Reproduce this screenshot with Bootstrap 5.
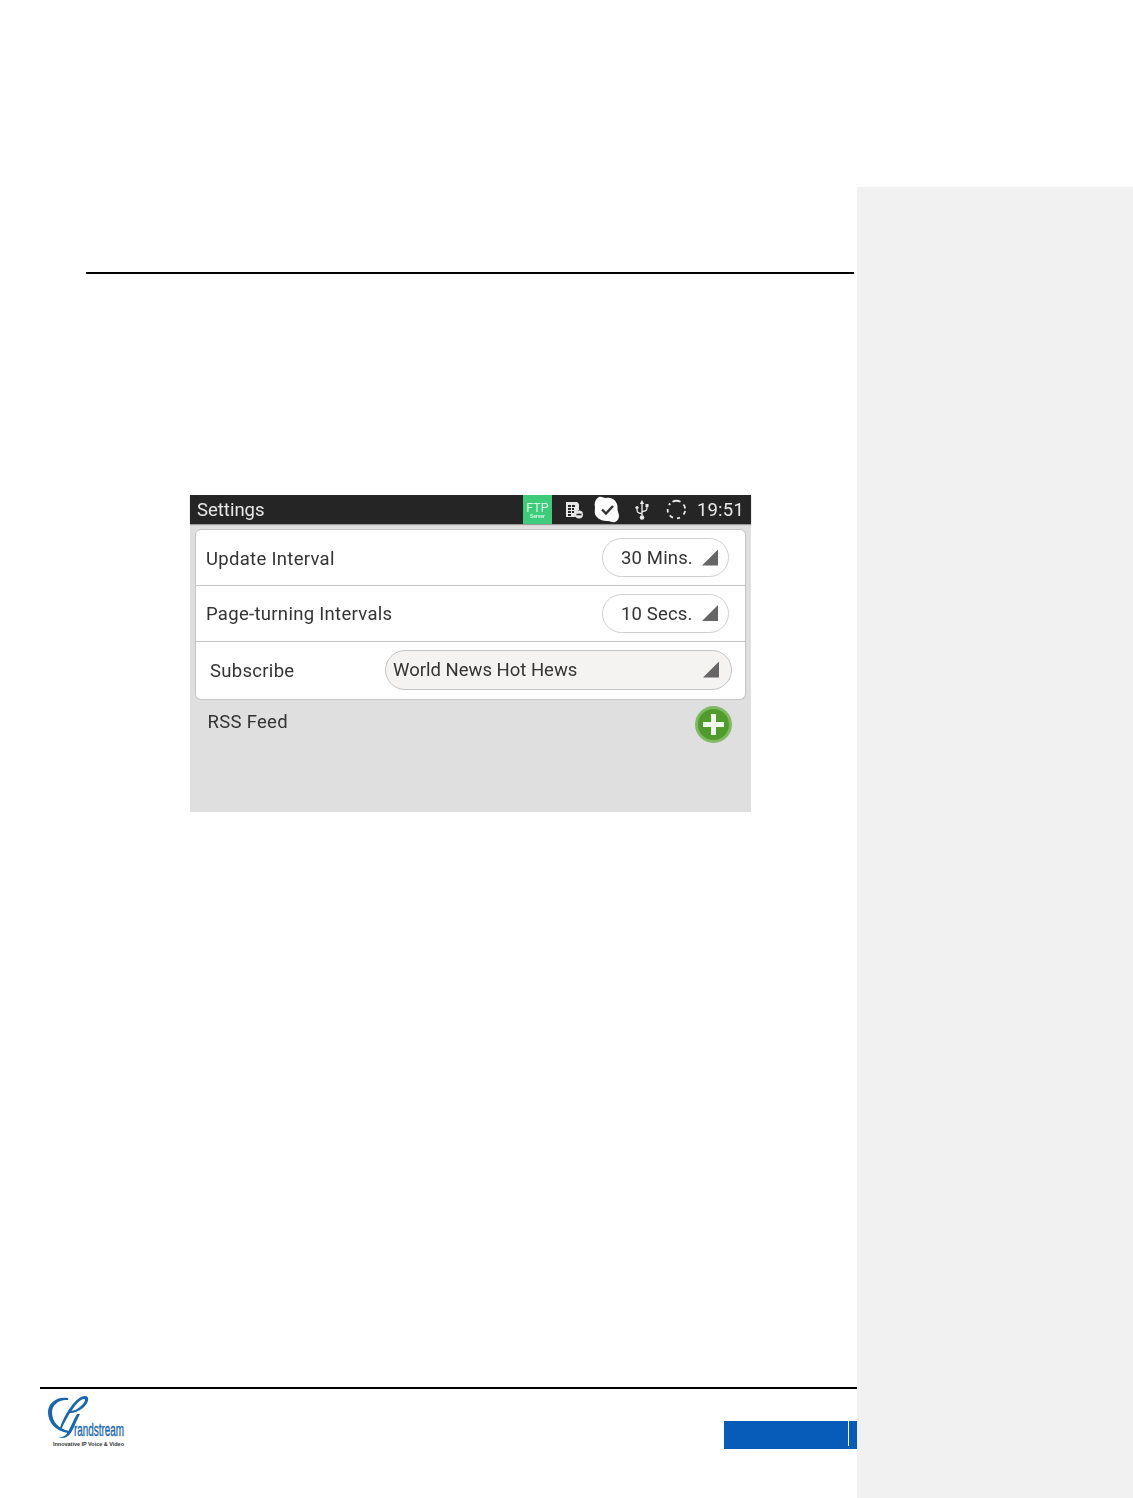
<!DOCTYPE html>
<html lang="en">
<head>
<meta charset="utf-8">
<title>Settings</title>
<link href="https://cdn.jsdelivr.net/npm/bootstrap@5.3.0/dist/css/bootstrap.min.css" rel="stylesheet">
<style>
html,body{height:1498px;overflow:hidden;background:#fff}
.page-wrap{height:1498px}
.doc-col{width:857px;flex:none}
.side-col{width:276px;flex:none;margin-top:187px;background:#f1f1f1}
.top-rule{height:2px;background:#000;margin:272px 3px 0 86px}
.shot{width:561px;height:317px;margin:221px 0 0 190px;background:#dfdfdf;font-family:Roboto,"Liberation Sans",sans-serif;color:#333;font-size:18.5px;line-height:1;filter:blur(.35px)}
.shot-bar{height:29px;background:#252525;color:#e8e8e8;padding-left:7px;box-shadow:0 1px 1px #9a9a9a}
.bar-title{font-size:18.5px;padding-top:2px}
.ftp-tile{width:29px;height:29px;background:#3ecb7a;color:#d8f5e4;margin-left:auto;line-height:1;padding-top:8px}
.ftp-main{font-size:12.5px;line-height:10px}
.ftp-sub{font-size:5px;line-height:6px;font-weight:700}
.bar-time{font-size:18.5px;margin:0 7px 0 10px;letter-spacing:.2px;padding-top:2px}
.ico-doc{margin-left:13px}.ico-ok{margin-left:11px}.ico-usb{margin-left:14px}.ico-ring{margin-left:17px}
.set-panel{margin:5px 5px 0 5px;--bs-list-group-border-color:#c4c4c4;--bs-list-group-border-radius:6px;--bs-list-group-color:#333;--bs-list-group-item-padding-x:0;--bs-list-group-item-padding-y:0}
.set-row{display:flex;align-items:center;height:56px;padding-left:10px!important}
.set-row.first-row{height:57px}
.set-row.last-row{height:58px;padding-left:14px!important}
.row-label{letter-spacing:.3px;padding-top:1px}
.first-row .row-label{padding-top:3px}
.pill-pick{width:127px;height:39px;margin-left:auto;margin-right:16px;border:1px solid #cfcfcf;border-radius:20px;background:#fff;padding:1px 10px 0 18px;letter-spacing:.15px}
.first-row .pill-pick{padding-top:2px}
.pill-wide{width:347px;height:40px;margin-right:13px;margin-bottom:2px;background:#f4f3f2;border-color:#c4c4c4;padding:2px 12px 0 7px;margin-left:auto;letter-spacing:0}
.pick-tri{width:16px;height:16px;background:#666;clip-path:polygon(100% 0,100% 100%,0 100%);margin-left:auto;flex:none;margin-top:-2px}
.rss-row{padding:6px 19px 0 17.5px}
.rss-label{letter-spacing:.3px;padding-top:7px}
.foot-rule{height:2px;background:#000;margin:575px 0 0 40px}
.foot-row{height:109px;position:relative}
.logo-svg{display:block;margin:6px 0 0 48px}
.blue-tab{position:absolute;left:724px;top:32px;width:133px;height:28px;background:#075cb9}
.blue-tab::after{content:"";position:absolute;left:124px;top:0;width:1px;height:25px;background:#fff}
</style>
</head>
<body>
<div class="page-wrap d-flex">
  <div class="doc-col d-flex flex-column">
    <div class="top-rule"></div>
    <div class="shot">
      <div class="shot-bar d-flex align-items-center">
        <span class="bar-title">Settings</span>
        <div class="ftp-tile text-center">
          <div class="ftp-main">FTP</div>
          <div class="ftp-sub">Server</div>
        </div>
        <svg class="ico-doc" width="18" height="18" viewBox="0 0 18 18"><path d="M1 1h11l2 2v6a5 5 0 0 0-3 7H1z" fill="#e8e8e8"/><path d="M3 4h3v2H3zM7 4h3v2H7zM3 7h3v2H3zM7 7h2v2H7zM3 10h3v2H3zM7 10h2v2H7zM3 13h3v2H3z" fill="#252525"/><circle cx="14" cy="13.5" r="4" fill="#e8e8e8"/><rect x="11.5" y="12.7" width="5" height="1.6" fill="#252525"/></svg>
        <svg class="ico-ok" width="27" height="27" viewBox="0 0 27 27"><path d="M5 1c3-1 4 1 7 1 5-1 9 1 11 6 1 3 0 5 1 8 2 4 1 8-3 10-3 1-4-1-7-1-5 0-9-1-12-5-2-3-1-6-1-9C0 8 1 3 5 1z" fill="#fff"/><path d="M8 13.500l4 4 7-7.500" fill="none" stroke="#333" stroke-width="2.400"/></svg>
        <svg class="ico-usb" width="14" height="22" viewBox="0 0 14 22"><path d="M7 1 4.800 5h1.500v11.500h1.400V5h1.500z" fill="#e8e8e8"/><path d="M7 14.500c-5 0-5-2-5-5M7 12.500c5 0 5-2 5-5" fill="none" stroke="#e8e8e8" stroke-width="1.300"/><circle cx="2" cy="8.500" r="1.600" fill="#e8e8e8"/><rect x="10.500" y="5" width="3" height="3" fill="#e8e8e8"/><circle cx="7" cy="18.500" r="2.300" fill="#e8e8e8"/></svg>
        <svg class="ico-ring" width="21" height="21" viewBox="0 0 21 21" fill="none" stroke="#e8e8e8" stroke-width="1.800"><path d="M6.500 2.800a8.800 8.800 0 0 1 8 0M17.500 5.500a8.800 8.800 0 0 1 1.700 4M19.200 12a8.800 8.800 0 0 1-1.700 3.500M14 18.700a8.800 8.800 0 0 1-3 .6M7 18.700a8.800 8.800 0 0 1-3.300-2.300M2 13.500a8.800 8.800 0 0 1-.3-3.500M3 6a8.800 8.800 0 0 1 1.200-1.500"/></svg>
        <span class="bar-time">19:51</span>
      </div>
      <div class="list-group set-panel">
        <div class="list-group-item set-row first-row">
          <span class="row-label">Update Interval</span>
          <div class="pill-pick d-flex align-items-center"><span>30 Mins.</span><span class="pick-tri"></span></div>
        </div>
        <div class="list-group-item set-row">
          <span class="row-label">Page-turning Intervals</span>
          <div class="pill-pick d-flex align-items-center"><span>10 Secs.</span><span class="pick-tri"></span></div>
        </div>
        <div class="list-group-item set-row last-row">
          <span class="row-label">Subscribe</span>
          <div class="pill-pick pill-wide d-flex align-items-center"><span>World News Hot Hews</span><span class="pick-tri"></span></div>
        </div>
      </div>
      <div class="rss-row d-flex justify-content-between align-items-start">
        <span class="rss-label">RSS Feed</span>
        <svg width="37" height="37" viewBox="0 0 37 37"><circle cx="18.500" cy="18.500" r="18.500" fill="#7fba62"/><circle cx="18.500" cy="18.500" r="15.500" fill="#4f9c2c"/><path d="M16 8h5v8h8v5h-8v8h-5v-8H8v-5h8z" fill="#f2f7ee"/></svg>
      </div>
    </div>
    <div class="foot-rule"></div>
    <div class="foot-row">
      <svg class="logo-svg" width="120" height="53" viewBox="0 0 120 53">
        <path d="M20 3C9 1 0 8 0 17c0 11 8 19 20 21l1-2C11 34 4 27 4 17 4 10 11 4 20 5z" fill="#1666b0"/>
        <path d="M12 33C16 20 28 1 37 1c5 0 4 7-2 12-4 3-9 5-13 5v-2c5 0 9-3 12-6 3-3 4-6 2-6-6 0-16 16-22 29z" fill="#1666b0"/>
        <path d="M32 19c-4 7-6 15-10 20-3 4-8 5-12 3 4 1 8-1 10-5 3-6 6-13 9-18z" fill="#1666b0"/>
        <text x="26" y="41" font-family="Liberation Sans,sans-serif" font-size="18" textLength="50" lengthAdjust="spacingAndGlyphs" fill="#1666b0" stroke="#1666b0" stroke-width=".35">randstream</text>
        <text x="5" y="51" font-family="Liberation Sans,sans-serif" font-size="5.600" font-weight="700" textLength="71" lengthAdjust="spacingAndGlyphs" fill="#333">Innovative IP Voice &amp; Video</text>
      </svg>
      <div class="blue-tab"></div>
    </div>
  </div>
  <div class="side-col"></div>
</div>
<script src="https://cdn.jsdelivr.net/npm/bootstrap@5.3.0/dist/js/bootstrap.bundle.min.js"></script>
</body>
</html>
